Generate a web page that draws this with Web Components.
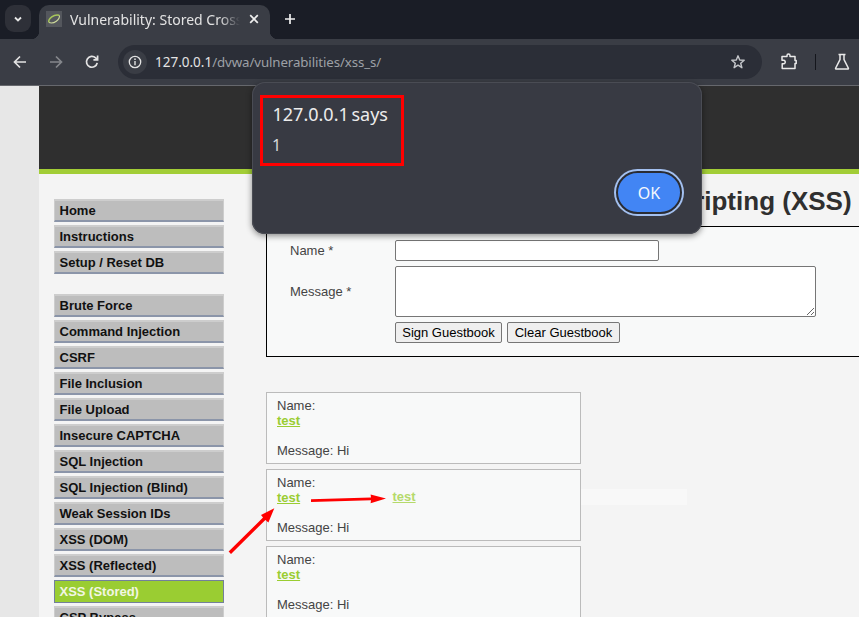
<!DOCTYPE html>
<html><head><meta charset="utf-8"><title>Vulnerability: Stored Cross Site Scripting (XSS)</title>
<style>
html,body{margin:0;padding:0;width:859px;height:617px;overflow:hidden;background:#f4f4f4}
body{position:relative;font-family:"Liberation Sans",Arial,sans-serif}
browser-chrome{display:block}
</style></head><body>
<browser-chrome></browser-chrome>
<dvwa-page>
  <dvwa-menu slot="menu"></dvwa-menu>
  <h1 slot="title">Vulnerability: Stored Cross Site Scripting (XSS)</h1>
  <guest-form slot="form"></guest-form>
  <guest-entry slot="entries" name="test" message="Hi"></guest-entry>
  <guest-entry slot="entries" name="test" message="Hi"></guest-entry>
  <guest-entry slot="entries" name="test" message="Hi"></guest-entry>
</dvwa-page>
<paste-strip></paste-strip>
<red-arrows></red-arrows>
<alert-dialog origin="127.0.0.1 says" message="1"></alert-dialog>
<script>
function def(name, html){
  customElements.define(name, class extends HTMLElement{
    constructor(){super();this.attachShadow({mode:'open'}).innerHTML=html;}
  });
}
def('browser-chrome',`<style>
:host{display:block;height:86px;font-family:"Noto Sans","Open Sans",sans-serif;background:#1a1d26}
.strip{height:39px;display:flex;align-items:flex-start;padding:5px 0 0 5px;box-sizing:border-box}
.drop{width:26px;height:27px;border-radius:9px;background:#2e3038;display:flex;align-items:center;justify-content:center}
.tab{position:relative;margin-left:8px;width:231px;height:34px;background:#3a3d45;border-radius:10px 10px 0 0;display:flex;align-items:center;padding:0 0 6px 7px;box-sizing:border-box}
.tab:after{content:"";position:absolute;right:-8px;bottom:0;width:8px;height:8px;background:radial-gradient(circle at 100% 0,transparent 8px,#3a3d45 8.5px)}
.tab:before{content:"";position:absolute;left:-8px;bottom:0;width:8px;height:8px;background:radial-gradient(circle at 0 0,transparent 8px,#3a3d45 8.5px)}
.fav{width:16px;height:16px;flex:none;display:block}
.ttl{margin-left:8px;width:170px;overflow:hidden;white-space:nowrap;font-size:14px;color:#e3e3e3;-webkit-mask-image:linear-gradient(90deg,#000 88%,transparent)}
.x{margin-left:9px;display:block}
.plus{margin-left:14px;margin-top:8px;display:block}
.bar{height:47px;background:#3a3d45;border-bottom:1px solid #66686d;box-sizing:border-box;display:flex;align-items:flex-start;padding:6px 0 0 2px}
.nav{width:36px;height:34px;display:flex;align-items:center;justify-content:center;flex:none}
.url{margin-left:8px;width:644px;height:34px;border-radius:17px;background:#2b2e37;display:flex;align-items:center;padding-left:5px;box-sizing:border-box;flex:none}
.chip{width:24px;height:24px;border-radius:50%;background:#3a3d45;display:flex;align-items:center;justify-content:center;flex:none}
.addr{margin-left:8px;font-size:13.3px;letter-spacing:-.11px;color:#9da0a6;white-space:nowrap;flex:1}
.addr b{font-weight:400;color:#e3e3e3;font-size:13.5px;letter-spacing:0}
.star{margin-right:16px;display:block}
.ext{margin-left:18px;margin-top:8px;display:block}
.sep{width:1px;height:16px;background:#14161c;margin:9px 0 0 17px}
.lab{margin-left:18px;margin-top:8px;display:block}
</style>
<div class="strip">
 <div class="drop"><svg width="10" height="10" viewBox="0 0 10 10"><path d="M2 3.5 5 6.5 8 3.5" fill="none" stroke="#e6e6e6" stroke-width="1.8"/></svg></div>
 <div class="tab">
  <svg class="fav" viewBox="0 0 16 16"><rect width="16" height="16" fill="#54575d"/><path d="M2.8 11.4C2 7.5 8 2.8 13.2 4.2" fill="none" stroke="#a7c65a" stroke-width="1.5"/><path d="M13.4 4.4C14 8.6 8 13.4 3 11.6" fill="none" stroke="#cfdc9c" stroke-width="1.1"/></svg>
  <span class="ttl">Vulnerability: Stored Cross Site Scripting (XSS) :: Damn Vulnerable Web Application</span>
  <svg class="x" width="10" height="10" viewBox="0 0 10 10"><path d="M1.2 1.2 8.8 8.8M8.8 1.2 1.2 8.8" stroke="#eee" stroke-width="1.7"/></svg>
 </div>
 <svg class="plus" width="12" height="12" viewBox="0 0 12 12"><path d="M6 1V11M1 6H11" stroke="#f0f0f0" stroke-width="1.7"/></svg>
</div>
<div class="bar">
 <div class="nav"><svg width="16" height="16" viewBox="0 0 16 16"><path d="M14 8H3M8 2.5 2.5 8 8 13.5" fill="none" stroke="#e3e3e3" stroke-width="1.7"/></svg></div>
 <div class="nav"><svg width="16" height="16" viewBox="0 0 16 16"><path d="M2 8H13M8 2.5 13.5 8 8 13.5" fill="none" stroke="#85878c" stroke-width="1.7"/></svg></div>
 <div class="nav"><svg width="16" height="16" viewBox="0 0 16 16"><path d="M13.2 8.8A5.4 5.4 0 1 1 11.6 3.9L13.6 5.7M13.6 1.6V5.9H9.4" fill="none" stroke="#e3e3e3" stroke-width="1.7"/></svg></div>
 <div class="url">
  <div class="chip"><svg width="14" height="14" viewBox="0 0 14 14"><circle cx="7" cy="7" r="5.7" fill="none" stroke="#e3e3e3" stroke-width="1.3"/><path d="M7 6V10.2" stroke="#e3e3e3" stroke-width="1.4"/><circle cx="7" cy="4.2" r=".85" fill="#e3e3e3"/></svg></div>
  <span class="addr"><b>127.0.0.1</b>/dvwa/vulnerabilities/xss_s/</span>
  <svg class="star" width="16" height="16" viewBox="0 0 16 16"><path d="M8 1.8 9.7 6 14.2 6.3 10.7 9.2 11.9 13.7 8 11.2 4.1 13.7 5.3 9.2 1.8 6.3 6.3 6Z" fill="none" stroke="#c4c6ca" stroke-width="1.4" stroke-linejoin="round"/></svg>
 </div>
 <svg class="ext" width="18" height="18" viewBox="0 0 18 18"><path d="M2 3.5H7V2.6A1.3 1.3 0 0 1 10 2.6V3.5H15V7.6H16.2V10.4H15V15.5H2.2V10.8H4A1.9 1.9 0 0 0 4 7.2H2Z" fill="none" stroke="#eaeaea" stroke-width="1.5" stroke-linejoin="round"/></svg>
 <div class="sep"></div>
 <svg class="lab" width="16" height="18" viewBox="0 0 16 18"><path d="M4.5 1.5H11.5M6 1.5V6.5L1.6 15.2A.6.6 0 0 0 2.2 16H13.8A.6.6 0 0 0 14.4 15.2L10 6.5V1.5" fill="none" stroke="#eaeaea" stroke-width="1.5"/></svg>
</div>`);

def('dvwa-page',`<style>
:host{display:flex;height:531px;overflow:hidden;background:#e7e7e7}
.wrap{margin-left:39px;flex:1;min-width:0;background:#f4f4f4;overflow:hidden}
.hdr{height:83px;background:#2f2f2f;border-bottom:5px solid #a2cd36}
.cols{display:flex;padding-top:11px}
.menu{width:170px;margin:14px 0 0 15px;flex:none}
.main{margin-left:42px;width:600px;flex:none}
::slotted(h1){margin:0 0 9px;font:bold 26px/32px "Liberation Sans",Arial,sans-serif;color:#2f2f2f;white-space:nowrap}
.entries{margin-top:35px;display:flex;flex-direction:column;gap:5px}
</style>
<div class="wrap"><div class="hdr"></div>
<div class="cols"><div class="menu"><slot name="menu"></slot></div>
<div class="main"><slot name="title"></slot><slot name="form"></slot><div class="entries"><slot name="entries"></slot></div></div></div></div>`);

def('menu-item',`<style>
:host{display:block;height:23px;box-sizing:border-box;margin-bottom:3px;background:#bdbdbd;border:1px solid #cdcdcd;border-top-width:2px;border-bottom:2px solid #8b95a9;padding-left:4.5px;font:bold 13px/19px "Liberation Sans",Arial,sans-serif;color:#111;white-space:nowrap}
:host([active]){background:#9acd32;color:#f2f6e4;border:1px solid #73809b;line-height:21px}
</style><slot></slot>`);

def('dvwa-menu',`<style>:host{display:block}.g{margin-bottom:20px}</style>
<div class="g"><menu-item>Home</menu-item><menu-item>Instructions</menu-item><menu-item>Setup / Reset DB</menu-item></div>
<div class="g"><menu-item>Brute Force</menu-item><menu-item>Command Injection</menu-item><menu-item>CSRF</menu-item><menu-item>File Inclusion</menu-item><menu-item>File Upload</menu-item><menu-item>Insecure CAPTCHA</menu-item><menu-item>SQL Injection</menu-item><menu-item>SQL Injection (Blind)</menu-item><menu-item>Weak Session IDs</menu-item><menu-item>XSS (DOM)</menu-item><menu-item>XSS (Reflected)</menu-item><menu-item active>XSS (Stored)</menu-item><menu-item>CSP Bypass</menu-item></div>`);

def('guest-form',`<style>
:host{display:block;height:131px;box-sizing:border-box;border:1px solid #000;border-right:0;width:640px;background:#f8f9f9;font:13px/15px "Liberation Sans",Arial,sans-serif;color:#444;padding:13px 0 0 23px}
.row{display:flex;align-items:center}
label{width:105px;flex:none}
input,textarea{box-sizing:border-box;margin:0;border:1px solid #767676;border-radius:2px;background:#fff;display:block;padding:0}
input{width:264px;height:21px}
textarea{width:421px;height:51px}
.row+.row{margin-top:5px}
.btns{padding-left:105px}
button{box-sizing:border-box;height:21px;margin:0 5px 0 0;padding:0;border:1px solid #767676;border-radius:2px;background:#efefef;color:#000;font:13px "Liberation Sans",Arial,sans-serif;width:107px}
button+button{width:113px}
</style>
<div class="row"><label>Name *</label><input type="text"></div>
<div class="row"><label>Message *</label><textarea></textarea></div>
<div class="row btns"><button>Sign Guestbook</button><button>Clear Guestbook</button></div>`);

customElements.define('guest-entry',class extends HTMLElement{
 constructor(){super();this.attachShadow({mode:'open'}).innerHTML=`<style>
:host{display:block;width:315px;height:72px;box-sizing:border-box;border:1px solid #bbb;background:#f8f9f9;padding:5px 10px;font:13px/15px "Liberation Sans",Arial,sans-serif;color:#444}
a{color:#9acd32;font-weight:700;text-decoration:underline;display:inline-block}
.m{margin-top:15px}
</style><div>Name:</div><div><a id="n"></a></div><div class="m">Message: <span id="m"></span></div>`;}
 connectedCallback(){this.shadowRoot.getElementById('n').textContent=this.getAttribute('name');this.shadowRoot.getElementById('m').textContent=this.getAttribute('message');}
});

def('paste-strip',`<style>
:host{position:absolute;left:386px;top:489px;width:301px;height:16px;display:block;font:bold 13px/16px "Liberation Sans",Arial,sans-serif}
.t{position:absolute;left:6.5px;top:0;color:#b5da6b;text-decoration:underline}
.f{position:absolute;left:195px;top:0;width:106px;height:16px;background:#f8f8f8}
</style><span class="t">test</span><span class="f"></span>`);

def('red-arrows',`<style>:host{position:absolute;left:0;top:0;width:859px;height:617px;display:block;pointer-events:none}</style>
<svg width="859" height="617" viewBox="0 0 859 617"><g fill="#f00">
<path d="M228.6 551.4 263 517.6 261 515 274.3 508.3 268.4 522.6 265.4 520 231 554Z"/>
<path d="M311 499.2 371 497.6 370.6 494.6 386 498.6 370.6 503.3 371 500.2 311 501.9Z"/></g></svg>`);

customElements.define('alert-dialog',class extends HTMLElement{
 constructor(){super();this.attachShadow({mode:'open'}).innerHTML=`<style>
:host{position:absolute;left:252px;top:82px;width:450px;height:152px;box-sizing:border-box;display:block;background:#383a43;border-radius:13px;box-shadow:0 2px 6px rgba(0,0,0,.45),0 0 0 1px #4a4c54 inset;font-family:"Noto Sans","Open Sans",sans-serif;color:#e8e8e8}
.mark{position:absolute;left:8px;top:13px;width:144px;height:71px;box-sizing:border-box;border:3px solid #f00}
.h{position:absolute;left:20.5px;top:19px;font-size:18px;line-height:26px;white-space:nowrap;color:#ececec;word-spacing:-2px}
.b{position:absolute;left:20px;top:52px;font-size:16px;line-height:22px;color:#d8d9db}
.ok{position:absolute;left:364px;top:89px;width:66px;height:43px;box-sizing:border-box;border-radius:22px;background:#4285f4;color:#f4f7fd;border:2px solid #2a2c33;box-shadow:0 0 0 2px #a3c0f0;font:16px "Noto Sans","Open Sans",sans-serif;padding:0}
</style><div class="h" id="h"></div><div class="b" id="b"></div><div class="mark"></div><button class="ok">OK</button>`;}
 connectedCallback(){this.shadowRoot.getElementById('h').textContent=this.getAttribute('origin');this.shadowRoot.getElementById('b').textContent=this.getAttribute('message');}
});
</script>
</body></html>
